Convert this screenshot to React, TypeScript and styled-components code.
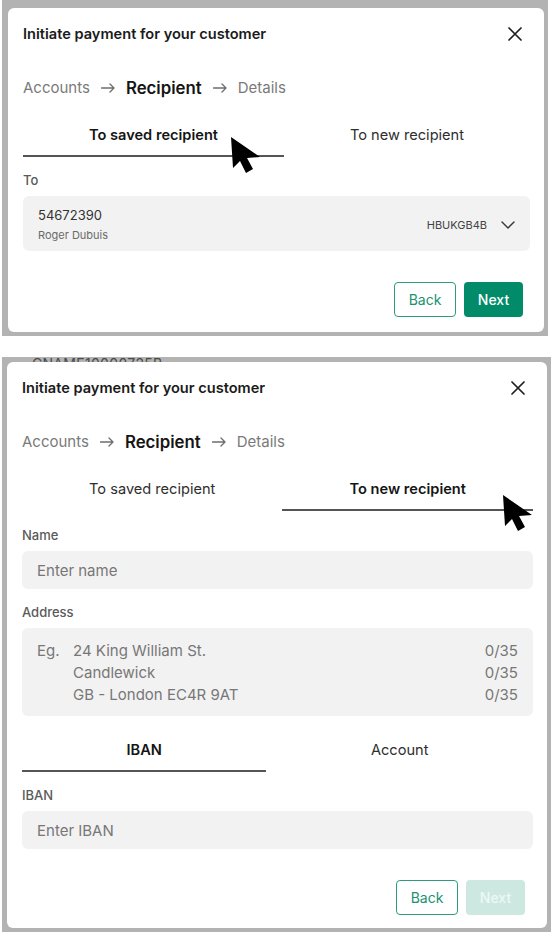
import React from "react";
import styled, { createGlobalStyle } from "styled-components";

const GlobalStyle = createGlobalStyle`
  html, body { margin: 0; padding: 0; background: #ffffff; }
  body { font-family: Inter, "Noto Sans", Arial, sans-serif; -webkit-font-smoothing: antialiased; }
  * { box-sizing: border-box; }
`;

const Page = styled.div`
  display: flex;
  flex-direction: column;
  align-items: flex-start;
  gap: 21px;
  padding-left: 2px;
`;

const Frame = styled.div<{ $w: number; $pt: number; $pl: number }>`
  width: ${(p) => p.$w}px;
  background: #b3b3b3;
  padding: ${(p) => p.$pt}px 4px 4px ${(p) => p.$pl}px;
  position: relative;
`;

const BackdropStrip = styled.div`
  position: absolute;
  top: 0;
  left: 30px;
  height: 5px;
  overflow: hidden;
  display: flex;
  align-items: flex-end;
`;

const BackdropText = styled.span`
  font-size: 14px;
  line-height: 14px;
  color: #4a4a4a;
  margin-bottom: -9px;
  letter-spacing: 0.3px;
`;

const Dialog = styled.div<{ $w: number; $pb: number }>`
  position: relative;
  width: ${(p) => p.$w}px;
  background: #ffffff;
  border-radius: 6px;
  display: flex;
  flex-direction: column;
  padding-bottom: ${(p) => p.$pb}px;
`;

const Header = styled.div`
  display: flex;
  align-items: center;
  justify-content: space-between;
  padding: 16px 22px 0 15px;
`;

const Title = styled.h2`
  margin: 0;
  font-size: 14.6px;
  line-height: 20px;
  font-weight: 600;
  color: #1b1b1b;
`;

const CloseButton = styled.button`
  border: 0;
  background: none;
  padding: 0;
  width: 14px;
  height: 14px;
  display: flex;
  color: #1e1e1e;
`;

const Body = styled.div`
  display: flex;
  flex-direction: column;
  padding: 0 14px 0 15px;
`;

const Breadcrumb = styled.nav`
  display: flex;
  align-items: center;
  gap: 11px;
  height: 24px;
  margin-top: 32px;
`;

const Crumb = styled.span<{ $active?: boolean }>`
  font-size: ${(p) => (p.$active ? 16.8 : 15)}px;
  font-weight: ${(p) => (p.$active ? 600 : 400)};
  color: ${(p) => (p.$active ? "#151515" : "#7a7a7a")};
  line-height: 24px;
`;

const Tabs = styled.div<{ $mt: number }>`
  display: flex;
  margin-top: ${(p) => p.$mt}px;
`;

const Tab = styled.div<{ $active?: boolean }>`
  flex: 1 1 auto;
  text-align: center;
  font-size: 14.6px;
  line-height: 20px;
  font-weight: ${(p) => (p.$active ? 600 : 400)};
  color: ${(p) => (p.$active ? "#151515" : "#2e2e2e")};
  padding-bottom: 10px;
  border-bottom: 2px solid ${(p) => (p.$active ? "#555555" : "transparent")};
`;

const Label = styled.div<{ $mt: number }>`
  margin-top: ${(p) => p.$mt}px;
  font-size: 13px;
  line-height: 16px;
  font-weight: 500;
  color: #5a5a5a;
`;

const SelectBox = styled.div`
  margin-top: 8px;
  height: 55px;
  background: #f2f2f2;
  border-radius: 6px;
  display: flex;
  align-items: center;
  justify-content: space-between;
  padding: 2px 15px 0 15px;
`;

const SelectMain = styled.div`
  display: flex;
  flex-direction: column;
  gap: 4px;
`;

const AccountNo = styled.span`
  font-size: 13px;
  line-height: 17px;
  color: #333333;
`;

const AccountName = styled.span`
  font-size: 11px;
  line-height: 14px;
  color: #6a6a6a;
`;

const SelectRight = styled.div`
  display: flex;
  align-items: center;
  gap: 14px;
  font-size: 11px;
  color: #444444;
`;

const Input = styled.div`
  margin-top: 8px;
  height: 38px;
  background: #f2f2f2;
  border-radius: 6px;
  display: flex;
  align-items: center;
  padding: 0 15px;
  font-size: 15px;
  color: #777777;
`;

const AddressBox = styled.div`
  margin-top: 8px;
  background: #f2f2f2;
  border-radius: 6px;
  padding: 12px 15px 10px 15px;
  display: grid;
  grid-template-columns: 36px 1fr auto;
  font-size: 15px;
  line-height: 22px;
  color: #777777;
`;

const Counter = styled.span`
  text-align: right;
`;

const Footer = styled.div<{ $mt: number; $pr: number }>`
  display: flex;
  justify-content: flex-end;
  gap: 8px;
  padding-right: ${(p) => p.$pr}px;
  margin-top: ${(p) => p.$mt}px;
`;

const OutlineButton = styled.button`
  height: 35px;
  width: 62px;
  border: 1px solid #2d9b7d;
  border-radius: 4px;
  background: #ffffff;
  color: #20926f;
  font-family: inherit;
  font-size: 14px;
  font-weight: 400;
`;

const PrimaryButton = styled.button<{ $disabled?: boolean }>`
  height: 35px;
  width: 59px;
  border: 0;
  border-radius: 4px;
  background: ${(p) => (p.$disabled ? "#cce8e0" : "#028b69")};
  color: ${(p) => (p.$disabled ? "#eef8f5" : "#ffffff")};
  font-family: inherit;
  font-size: 14px;
  font-weight: 500;
`;

const CursorWrap = styled.div`
  position: absolute;
  width: 32px;
  height: 38px;
  pointer-events: none;
`;

const CloseIcon = () => (
  <svg width="14" height="14" viewBox="0 0 14 14" fill="none">
    <path d="M1 1L13 13M13 1L1 13" stroke="currentColor" strokeWidth="1.7" strokeLinecap="round" />
  </svg>
);

const Arrow = () => (
  <svg width="14" height="10" viewBox="0 0 14 10" fill="none">
    <path d="M0.5 5H13M9 1L13 5L9 9" stroke="#6e6e6e" strokeWidth="1.3" strokeLinecap="round" strokeLinejoin="round" />
  </svg>
);

const Chevron = () => (
  <svg width="14" height="8" viewBox="0 0 14 8" fill="none">
    <path d="M1 1L7 7L13 1" stroke="#333" strokeWidth="1.4" strokeLinecap="round" strokeLinejoin="round" />
  </svg>
);

const Cursor = ({ x, y }: { x: number; y: number }) => (
  <CursorWrap style={{ left: x, top: y }}>
    <svg width="32" height="38" viewBox="0 0 32 38">
      <polygon points="1,1 3,32 10,25 16,37 23,33 17,22 30,21" fill="#000" />
    </svg>
  </CursorWrap>
);

const Steps = () => (
  <Breadcrumb>
    <Crumb>Accounts</Crumb>
    <Arrow />
    <Crumb $active>Recipient</Crumb>
    <Arrow />
    <Crumb>Details</Crumb>
  </Breadcrumb>
);

const DialogHeader = () => (
  <Header>
    <Title>Initiate payment for your customer</Title>
    <CloseButton aria-label="Close">
      <CloseIcon />
    </CloseButton>
  </Header>
);

export default function App() {
  return (
    <>
      <GlobalStyle />
      <Page>
        <Frame $w={546} $pt={8} $pl={6}>
          <Dialog $w={536} $pb={15}>
            <DialogHeader />
            <Body>
              <Steps />
              <Tabs $mt={25}>
                <Tab $active>To saved recipient</Tab>
                <Tab>To new recipient</Tab>
              </Tabs>
              <Label $mt={15}>To</Label>
              <SelectBox>
                <SelectMain>
                  <AccountNo>54672390</AccountNo>
                  <AccountName>Roger Dubuis</AccountName>
                </SelectMain>
                <SelectRight>
                  <span>HBUKGB4B</span>
                  <Chevron />
                </SelectRight>
              </SelectBox>
            </Body>
            <Footer $mt={31} $pr={21}>
              <OutlineButton>Back</OutlineButton>
              <PrimaryButton>Next</PrimaryButton>
            </Footer>
            <Cursor x={222} y={128} />
          </Dialog>
        </Frame>

        <Frame $w={549} $pt={5} $pl={5}>
          <BackdropStrip>
            <BackdropText>CNAME10000725B</BackdropText>
          </BackdropStrip>
          <Dialog $w={540} $pb={13}>
            <DialogHeader />
            <Body>
              <Steps />
              <Tabs $mt={25}>
                <Tab>To saved recipient</Tab>
                <Tab $active>To new recipient</Tab>
              </Tabs>
              <Label $mt={16}>Name</Label>
              <Input>Enter name</Input>
              <Label $mt={15}>Address</Label>
              <AddressBox>
                <span>Eg.</span>
                <span>24 King William St.</span>
                <Counter>0/35</Counter>
                <span />
                <span>Candlewick</span>
                <Counter>0/35</Counter>
                <span />
                <span>GB - London EC4R 9AT</span>
                <Counter>0/35</Counter>
              </AddressBox>
              <Tabs $mt={24}>
                <Tab $active>IBAN</Tab>
                <Tab>Account</Tab>
              </Tabs>
              <Label $mt={15}>IBAN</Label>
              <Input>Enter IBAN</Input>
            </Body>
            <Footer $mt={31} $pr={22}>
              <OutlineButton>Back</OutlineButton>
              <PrimaryButton $disabled>Next</PrimaryButton>
            </Footer>
            <Cursor x={495} y={132} />
          </Dialog>
        </Frame>
      </Page>
    </>
  );
}
